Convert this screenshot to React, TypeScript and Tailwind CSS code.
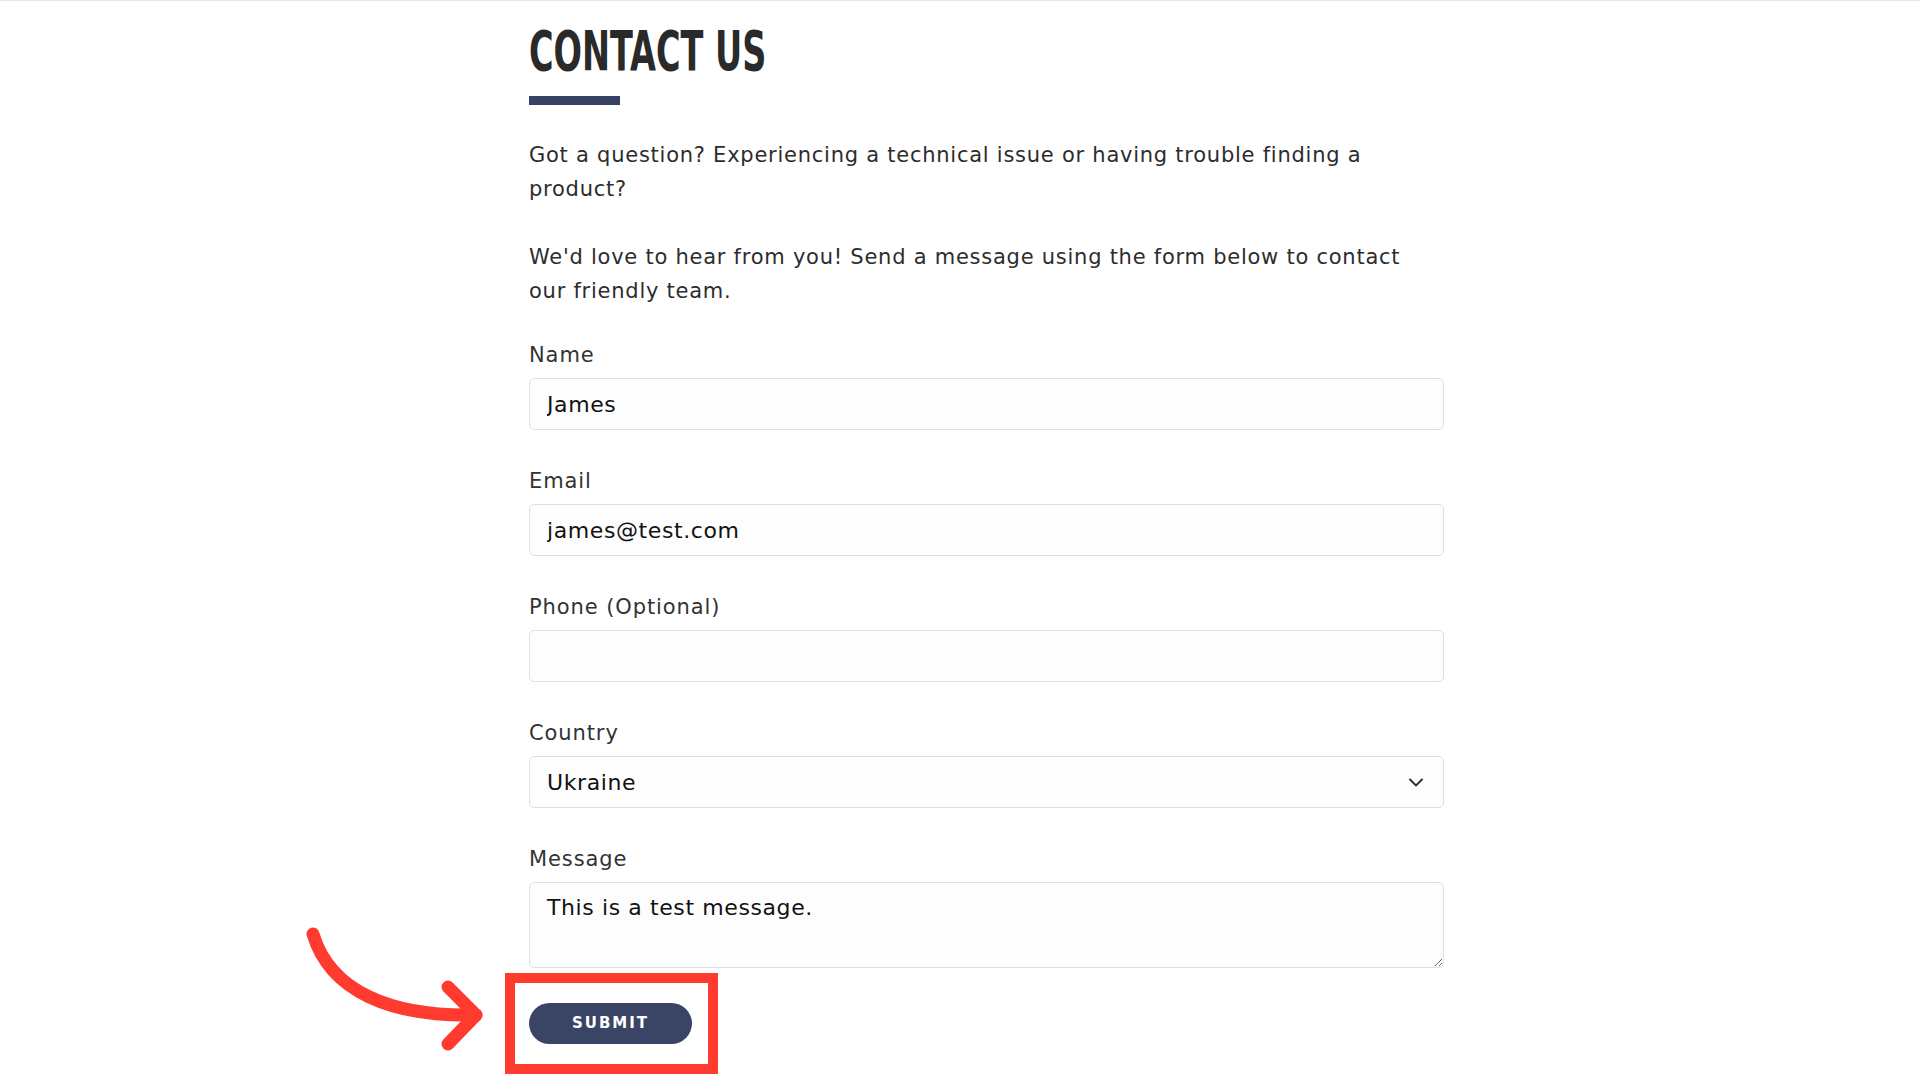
import React from 'react';

const fieldClass =
  'block w-full h-[52px] px-[17px] rounded-[5px] border border-[#dde1e7] bg-[#fdfdfd] text-[22px] tracking-[0.6px] text-[#111] outline-none';

function Field({ label, children }: { label: string; children: React.ReactNode }) {
  return (
    <div className="mb-[39px]">
      <label className="block text-[21px] tracking-[0.9px] leading-[24px] text-[#333] mb-[11px]">{label}</label>
      {children}
    </div>
  );
}

export default function App() {
  return (
    <div className="min-h-screen bg-white border-t border-[#e6e6e6] font-['DejaVu_Sans',sans-serif]">
      <div className="ml-[529px] w-[915px] pt-[22px]">
        {/* Heading */}
        <h1 className="inline-block origin-left scale-x-[0.665] font-['DejaVu_Sans_Condensed','DejaVu_Sans',sans-serif] font-bold text-[56px] leading-none text-[#2a2a2a] whitespace-nowrap">
          CONTACT US
        </h1>
        <div className="mt-[17px] w-[91px] h-[9px] bg-[#364163]" />

        <div className="mt-[33px] text-[21px] tracking-[0.75px] leading-[34px] text-[#2d2d2d]">
          <p className="mb-[34px]">
            Got a question? Experiencing a technical issue or having trouble finding a product?
          </p>
          <p className="mb-[35px]">
            We'd love to hear from you! Send a message using the form below to contact our friendly team.
          </p>
        </div>

        <form onSubmit={(e) => e.preventDefault()}>
          <Field label="Name">
            <input type="text" defaultValue="James" className={fieldClass} />
          </Field>
          <Field label="Email">
            <input type="email" defaultValue="james@test.com" className={fieldClass} />
          </Field>
          <Field label="Phone (Optional)">
            <input type="tel" className={fieldClass} />
          </Field>
          <Field label="Country">
            <div className="relative">
              <select defaultValue="Ukraine" className={`${fieldClass} appearance-none`}>
                <option>United Kingdom</option>
                <option>United States</option>
                <option>Ukraine</option>
              </select>
              <svg
                className="absolute right-[20px] top-[22px] pointer-events-none"
                width="16"
                height="9"
                viewBox="0 0 16 9"
                fill="none"
              >
                <path d="M2 1.5 8 7.5 14 1.5" stroke="#333" strokeWidth="2" strokeLinecap="round" strokeLinejoin="round" />
              </svg>
            </div>
          </Field>
          <div className="mb-[35px]">
            <label className="block text-[21px] tracking-[0.9px] leading-[24px] text-[#333] mb-[11px]">Message</label>
            <textarea
              defaultValue="This is a test message."
              className="block w-full h-[86px] px-[17px] pt-[10px] pb-[6px] rounded-[5px] border border-[#dde1e7] bg-[#fdfdfd] text-[22px] tracking-[0.6px] leading-[30px] text-[#111] outline-none resize-y"
            />
          </div>

          <div className="relative w-[163px]">
            <button
              type="submit"
              className="w-[163px] h-[41px] rounded-full bg-[#3a4566] text-white text-[15px] font-bold tracking-[0.13em]"
            >
              SUBMIT
            </button>
            {/* annotation box */}
            <div className="absolute -left-[24px] -top-[30px] w-[213px] h-[101px] border-[10px] border-[#ff3a2f] pointer-events-none" />
            {/* annotation arrow */}
            <svg
              className="absolute -left-[229px] -top-[82px] pointer-events-none"
              width="195"
              height="140"
              viewBox="0 0 195 140"
              fill="none"
            >
              <path
                d="M13 13 C30 70 90 96 176 94"
                stroke="#ff3a2f"
                strokeWidth="13"
                strokeLinecap="round"
              />
              <path
                d="M148 66 L176 94 L148 123"
                stroke="#ff3a2f"
                strokeWidth="13"
                strokeLinecap="round"
                strokeLinejoin="round"
              />
            </svg>
          </div>
        </form>
      </div>
    </div>
  );
}
